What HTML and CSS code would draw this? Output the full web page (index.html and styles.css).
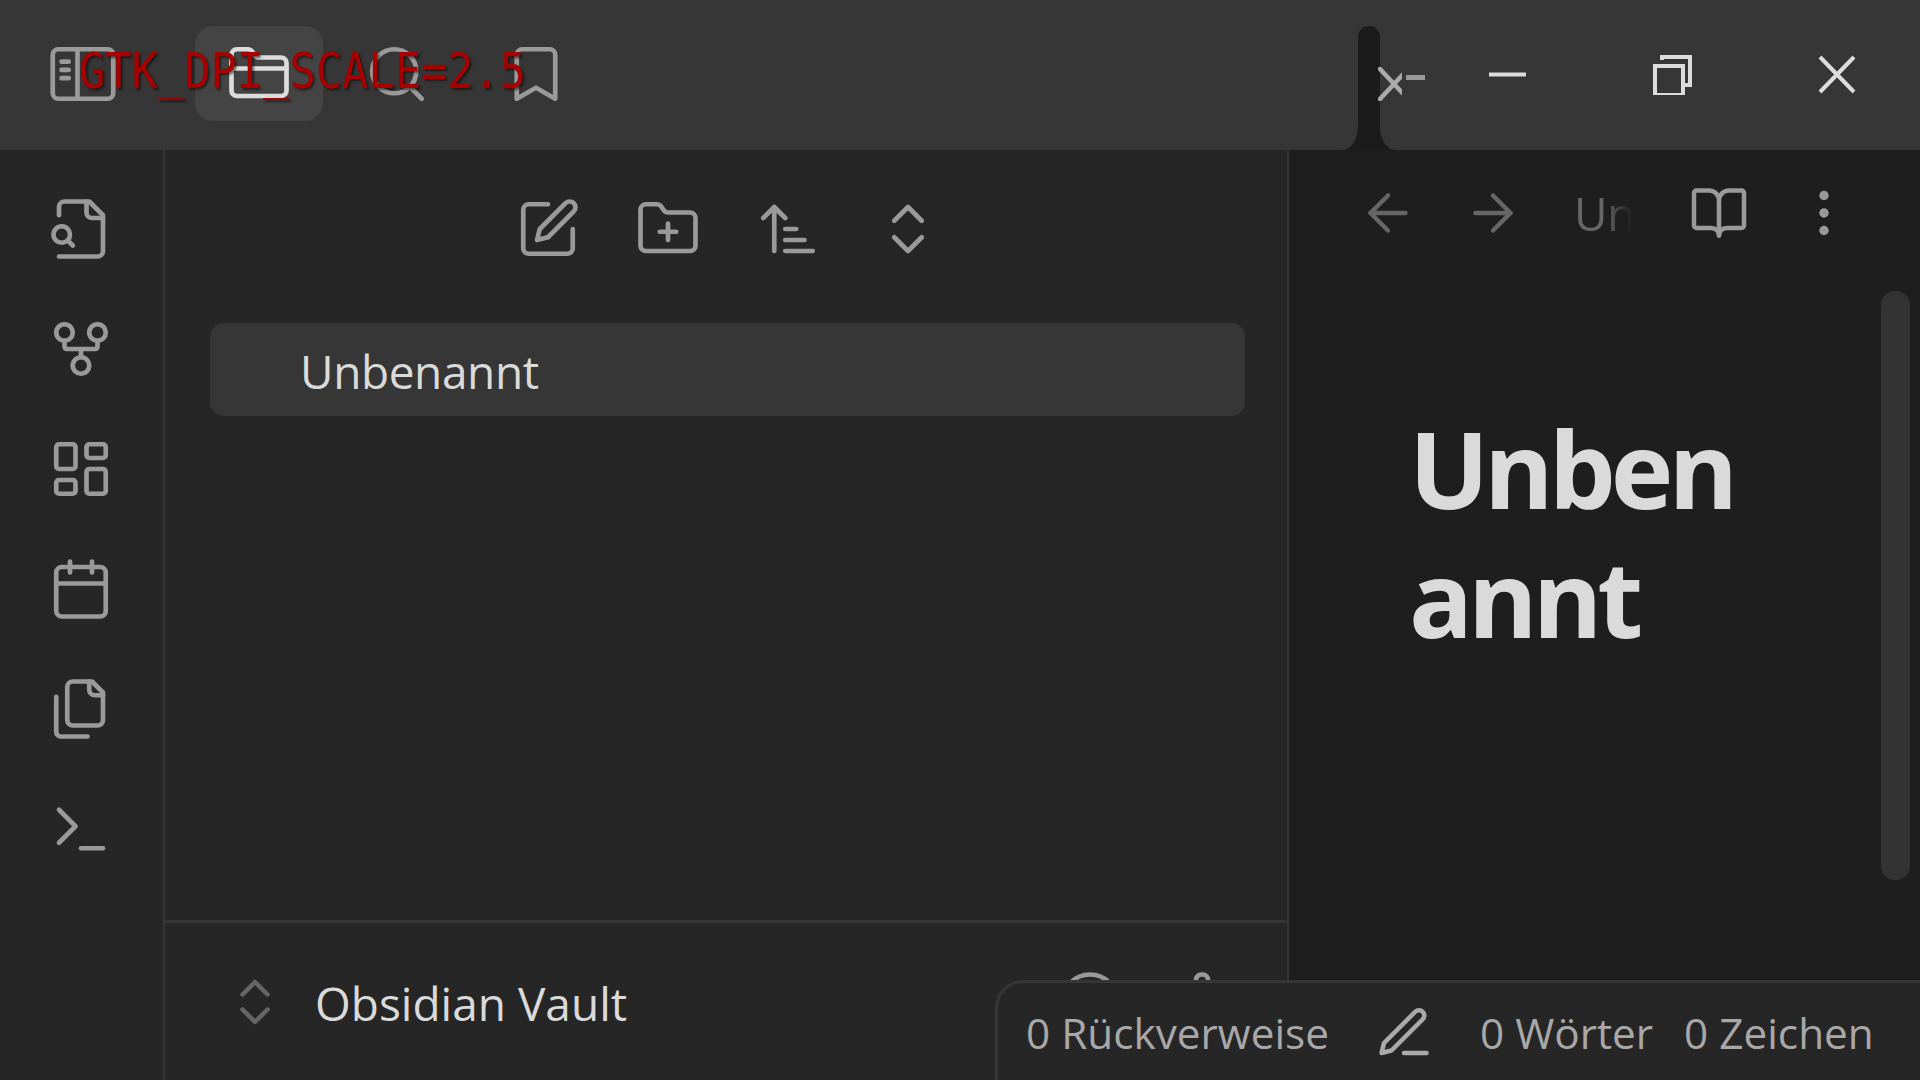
FILE: index.html
```html
<!DOCTYPE html>
<html lang="en">
<head>
    <meta charset="UTF-8">
    <meta name="viewport" content="width=device-width, initial-scale=1.0">
    <title>Obsidian Vault</title>
    <link rel="stylesheet" href="styles.css">
</head>
<body>
    <header class="titlebar">
        <div class="tab-button sidebar-toggle">
            <svg class="icon" viewBox="0 0 24 24"><rect x="1" y="3" width="22" height="18" rx="2"/><path d="M10 3v18M4.2 7.5h2.6M4.2 10.5h2.6M4.2 13.5h2.6"/></svg>
        </div>
        <div class="tab-button is-active">
            <svg class="icon" viewBox="0 0 24 24"><path d="M20 20a2 2 0 0 0 2-2V8a2 2 0 0 0-2-2h-7.9a2 2 0 0 1-1.69-.9L9.6 3.9A2 2 0 0 0 7.93 3H4a2 2 0 0 0-2 2v13a2 2 0 0 0 2 2Z"/><path d="M2 10h20"/></svg>
        </div>
        <div class="tab-button">
            <svg class="icon" viewBox="0 0 24 24"><circle cx="11" cy="11" r="8"/><path d="m21 21-4.3-4.3"/></svg>
        </div>
        <div class="tab-button bookmarks">
            <svg class="icon" viewBox="0 0 24 24"><path d="m19 21-7-4-7 4V5a2 2 0 0 1 2-2h10a2 2 0 0 1 2 2v16z"/></svg>
        </div>
        <div class="window-controls">
            <svg class="win-icon" viewBox="0 0 40 40"><path d="M2 19.5h37"/></svg>
            <svg class="win-icon" viewBox="0 0 40 40"><path d="M10 5V2h28v28h-5M3 11h28v29H3z"/></svg>
            <svg class="win-icon" viewBox="0 0 40 40"><path d="M3 2l34 35M37 2L3 37"/></svg>
        </div>
    </header>

    <!-- tab bar notch and the tab close icon that spills over it -->
    <svg class="notch" viewBox="0 0 54 124"><path d="M0 124C10 124 16 112 16 100V11A11 11 0 0 1 38 11V100C38 112 44 124 54 124Z"/></svg>
    <svg class="tab-close" viewBox="0 0 24 34"><path d="M2 2l28 30M30 2L2 32"/></svg>
    <div class="tab-dash"></div>

    <main class="workspace">
        <nav class="ribbon">
            <svg class="icon" viewBox="0 0 24 24"><path d="M4 22h14a2 2 0 0 0 2-2V7l-5-5H6a2 2 0 0 0-2 2v3"/><path d="M14 2v4a2 2 0 0 0 2 2h4"/><circle cx="5" cy="14" r="3"/><path d="m9 18-1.5-1.5"/></svg>
            <svg class="icon" viewBox="0 0 24 24"><circle cx="12" cy="18" r="3"/><circle cx="6" cy="6" r="3"/><circle cx="18" cy="6" r="3"/><path d="M18 9v2c0 .6-.4 1-1 1H7c-.6 0-1-.4-1-1V9"/><path d="M12 12v3"/></svg>
            <svg class="icon" viewBox="0 0 24 24"><rect x="3" y="3" width="7" height="9" rx="1"/><rect x="14" y="3" width="7" height="5" rx="1"/><rect x="14" y="12" width="7" height="9" rx="1"/><rect x="3" y="16" width="7" height="5" rx="1"/></svg>
            <svg class="icon" viewBox="0 0 24 24"><rect x="3" y="4" width="18" height="18" rx="2"/><path d="M16 2v4M8 2v4M3 10h18"/></svg>
            <svg class="icon" viewBox="0 0 24 24"><path d="M20 7h-3a2 2 0 0 1-2-2V2"/><path d="M9 18a2 2 0 0 1-2-2V4a2 2 0 0 1 2-2h7l4 4v10a2 2 0 0 1-2 2Z"/><path d="M3 7.6v12.8A1.6 1.6 0 0 0 4.6 22h9.8"/></svg>
            <svg class="icon" viewBox="0 0 24 24"><path d="m4 17 6-6-6-6"/><path d="M12 19h8"/></svg>
        </nav>

        <section class="file-pane">
            <div class="file-actions">
                <svg class="icon" viewBox="0 0 24 24"><path d="M12 3H5a2 2 0 0 0-2 2v14a2 2 0 0 0 2 2h14a2 2 0 0 0 2-2v-7"/><path d="M18.375 2.625a2.121 2.121 0 1 1 3 3L12 15l-4 1 1-4Z"/></svg>
                <svg class="icon" viewBox="0 0 24 24"><path d="M12 10v6M9 13h6"/><path d="M20 20a2 2 0 0 0 2-2V8a2 2 0 0 0-2-2h-7.9a2 2 0 0 1-1.69-.9L9.6 3.9A2 2 0 0 0 7.93 3H4a2 2 0 0 0-2 2v13a2 2 0 0 0 2 2Z"/></svg>
                <svg class="icon" viewBox="0 0 24 24"><path d="m3 8 4-4 4 4"/><path d="M7 4v16"/><path d="M11 12h4M11 16h7M11 20h10"/></svg>
                <svg class="icon" viewBox="0 0 24 24"><path d="m7 15 5 5 5-5"/><path d="m7 9 5-5 5 5"/></svg>
            </div>
            <div class="file-list">
                <div class="file-row">Unbenannt</div>
            </div>
            <footer class="vault-bar">
                <svg class="icon icon-small icon-dim" viewBox="0 0 24 24"><path d="m7 15 5 5 5-5"/><path d="m7 9 5-5 5 5"/></svg>
                <span class="vault-name">Obsidian Vault</span>
                <div class="vault-actions">
                    <svg class="icon" viewBox="0 0 24 24"><circle cx="12" cy="12" r="10"/><path d="M9.09 9a3 3 0 0 1 5.83 1c0 2-3 3-3 3"/><path d="M12 17h.01"/></svg>
                    <svg class="icon" viewBox="0 0 24 24"><path d="M12.22 2h-.44a2 2 0 0 0-2 2v.18a2 2 0 0 1-1 1.73l-.43.25a2 2 0 0 1-2 0l-.15-.08a2 2 0 0 0-2.73.73l-.22.38a2 2 0 0 0 .73 2.73l.15.1a2 2 0 0 1 1 1.72v.51a2 2 0 0 1-1 1.74l-.15.09a2 2 0 0 0-.73 2.73l.22.38a2 2 0 0 0 2.73.73l.15-.08a2 2 0 0 1 2 0l.43.25a2 2 0 0 1 1 1.73V20a2 2 0 0 0 2 2h.44a2 2 0 0 0 2-2v-.18a2 2 0 0 1 1-1.73l.43-.25a2 2 0 0 1 2 0l.15.08a2 2 0 0 0 2.73-.73l.22-.39a2 2 0 0 0-.73-2.73l-.15-.08a2 2 0 0 1-1-1.74v-.5a2 2 0 0 1 1-1.74l.15-.09a2 2 0 0 0 .73-2.73l-.22-.38a2 2 0 0 0-2.73-.73l-.15.08a2 2 0 0 1-2 0l-.43-.25a2 2 0 0 1-1-1.73V4a2 2 0 0 0-2-2z"/><circle cx="12" cy="12" r="3"/></svg>
                </div>
            </footer>
        </section>

        <section class="editor">
            <div class="editor-header">
                <svg class="icon icon-small icon-faint" viewBox="0 0 24 24"><path d="m12 19-7-7 7-7"/><path d="M19 12H5"/></svg>
                <svg class="icon icon-small icon-faint" viewBox="0 0 24 24"><path d="M5 12h14"/><path d="m12 5 7 7-7 7"/></svg>
                <div class="editor-title">Unbenannt</div>
                <svg class="icon icon-small" viewBox="0 0 24 24"><path d="M12 7v14"/><path d="M3 18a1 1 0 0 1-1-1V4a1 1 0 0 1 1-1h5a4 4 0 0 1 4 4 4 4 0 0 1 4-4h5a1 1 0 0 1 1 1v13a1 1 0 0 1-1 1h-6a3 3 0 0 0-3 3 3 3 0 0 0-3-3z"/></svg>
                <svg class="icon icon-small" viewBox="0 0 24 24"><circle cx="12" cy="12" r="1"/><circle cx="12" cy="5" r="1"/><circle cx="12" cy="19" r="1"/></svg>
            </div>
            <h1 class="note-title">Unbenannt</h1>
            <div class="scrollbar"></div>
        </section>
    </main>

    <div class="status-bar">
        <span class="status-item">0 Rückverweise</span>
        <svg class="icon icon-small status-pen" viewBox="0 0 24 24"><path d="M12 20h9"/><path d="M16.5 3.5a2.121 2.121 0 0 1 3 3L7 19l-4 1 1-4L16.5 3.5z"/></svg>
        <span class="status-item">0 Wörter</span>
        <span class="status-item">0 Zeichen</span>
    </div>

    <div class="debug-label">GTK_DPI_SCALE=2.5</div>
</body>
</html>
```

FILE: styles.css
```css
* {
    box-sizing: border-box;
}

body {
    margin: 0;
    width: 1920px;
    height: 1080px;
    overflow: hidden;
    position: relative;
    background: #262626;
    color: #dadada;
    font-family: "Open Sans", "Noto Sans", sans-serif;
}

.icon {
    width: 66px;
    height: 66px;
    flex: none;
    fill: none;
    stroke: #9a9a9a;
    stroke-width: 1.7;
    stroke-linecap: round;
    stroke-linejoin: round;
}

.icon-small {
    width: 60px;
    height: 60px;
    stroke-width: 1.8;
}

.icon-dim {
    stroke: #666;
}

.icon-faint {
    stroke: #666;
}

/* title bar */
.titlebar {
    height: 150px;
    background: #363636;
    display: flex;
    align-items: flex-start;
    padding-top: 26px;
    padding-left: 19px;
    gap: 10px;
}

.tab-button {
    width: 128px;
    height: 95px;
    border-radius: 18px;
    display: flex;
    align-items: center;
    justify-content: center;
}

.sidebar-toggle {
    margin-right: 38px;
}

.bookmarks {
    margin-left: 1px;
}

.tab-button.is-active {
    background: #444;
}

.tab-button.is-active .icon {
    stroke: #dcdcdc;
}

.window-controls {
    margin-left: auto;
    display: flex;
    gap: 125px;
    padding-right: 63px;
    padding-top: 29px;
}

.win-icon {
    width: 40px;
    height: 40px;
    fill: none;
    stroke: #dcdcdc;
    stroke-width: 4;
    display: block;
}

.notch {
    position: absolute;
    left: 1342px;
    top: 26px;
    width: 54px;
    height: 124px;
    fill: #1b1b1b;
}

.tab-close {
    position: absolute;
    left: 1378px;
    top: 67px;
    width: 24px;
    height: 34px;
    fill: none;
    stroke: #aaa;
    stroke-width: 4.5;
    stroke-linecap: round;
}

.tab-dash {
    position: absolute;
    left: 1406px;
    top: 75px;
    width: 19px;
    height: 5px;
    background: #999;
}

/* main area */
.workspace {
    display: flex;
    height: 930px;
}

.ribbon {
    width: 165px;
    flex: none;
    border-right: 2px solid #363636;
    display: flex;
    flex-direction: column;
    align-items: center;
    gap: 54px;
    padding-top: 46px;
    padding-right: 2px;
}

.file-pane {
    width: 1124px;
    flex: none;
    border-right: 2px solid #363636;
    display: flex;
    flex-direction: column;
}

.file-actions {
    display: flex;
    justify-content: center;
    gap: 54px;
    padding-top: 46px;
    padding-left: 3px;
}

.file-list {
    flex: 1;
    padding: 61px 42px 0 45px;
}

.file-row {
    height: 93px;
    background: #363636;
    border-radius: 14px;
    padding-left: 90px;
    font-size: 46px;
    letter-spacing: -0.4px;
    line-height: 96px;
}

.vault-bar {
    height: 160px;
    border-top: 3px solid #363636;
    display: flex;
    align-items: center;
    padding-left: 60px;
    flex: none;
}

.vault-name {
    margin-left: 30px;
    font-size: 46px;
    padding-top: 2px;
}

.vault-actions {
    margin-left: auto;
    display: flex;
    gap: 46px;
    padding-right: 52px;
    padding-bottom: 0;
}

.editor {
    flex: 1;
    background: #1e1e1e;
    position: relative;
}

.editor-header {
    height: 126px;
    display: flex;
    align-items: center;
    gap: 45px;
    padding-left: 69px;
}

.editor-title {
    width: 58px;
    margin: 0 12px 0 6px;
    overflow: hidden;
    white-space: nowrap;
    font-size: 46px;
    letter-spacing: -0.4px;
    color: #666;
    -webkit-mask-image: linear-gradient(to right, #000 55%, transparent);
    mask-image: linear-gradient(to right, #000 55%, transparent);
}

.note-title {
    margin: 0;
    padding-top: 128px;
    margin-left: 120px;
    width: 340px;
    font-size: 106px;
    line-height: 129px;
    font-weight: 700;
    letter-spacing: -5px;
    overflow-wrap: anywhere;
}

.scrollbar {
    position: absolute;
    left: 592px;
    top: 141px;
    width: 29px;
    height: 589px;
    border-radius: 14px;
    background: #333;
}

/* status bar sits over the bottom right corner */
.status-bar {
    position: absolute;
    left: 995px;
    right: 0;
    top: 980px;
    bottom: 0;
    background: #262626;
    border-top: 3px solid #363636;
    border-left: 3px solid #363636;
    border-top-left-radius: 28px;
    display: flex;
    align-items: center;
    padding-left: 28px;
    padding-top: 2px;
    font-size: 42.3px;
    color: #a8a8a8;
}

.status-pen {
    margin: 0 46px 0 45px;
    stroke: #aaa;
}

.status-item + .status-item {
    margin-left: 31px;
}

.debug-label {
    position: absolute;
    left: 79px;
    top: 45px;
    font-family: "DejaVu Sans Mono", monospace;
    font-size: 43.7px;
    color: #a60000;
    text-shadow: 2px 2px 2px rgba(0, 0, 0, 0.5);
    transform: scaleY(1.12);
}
```
